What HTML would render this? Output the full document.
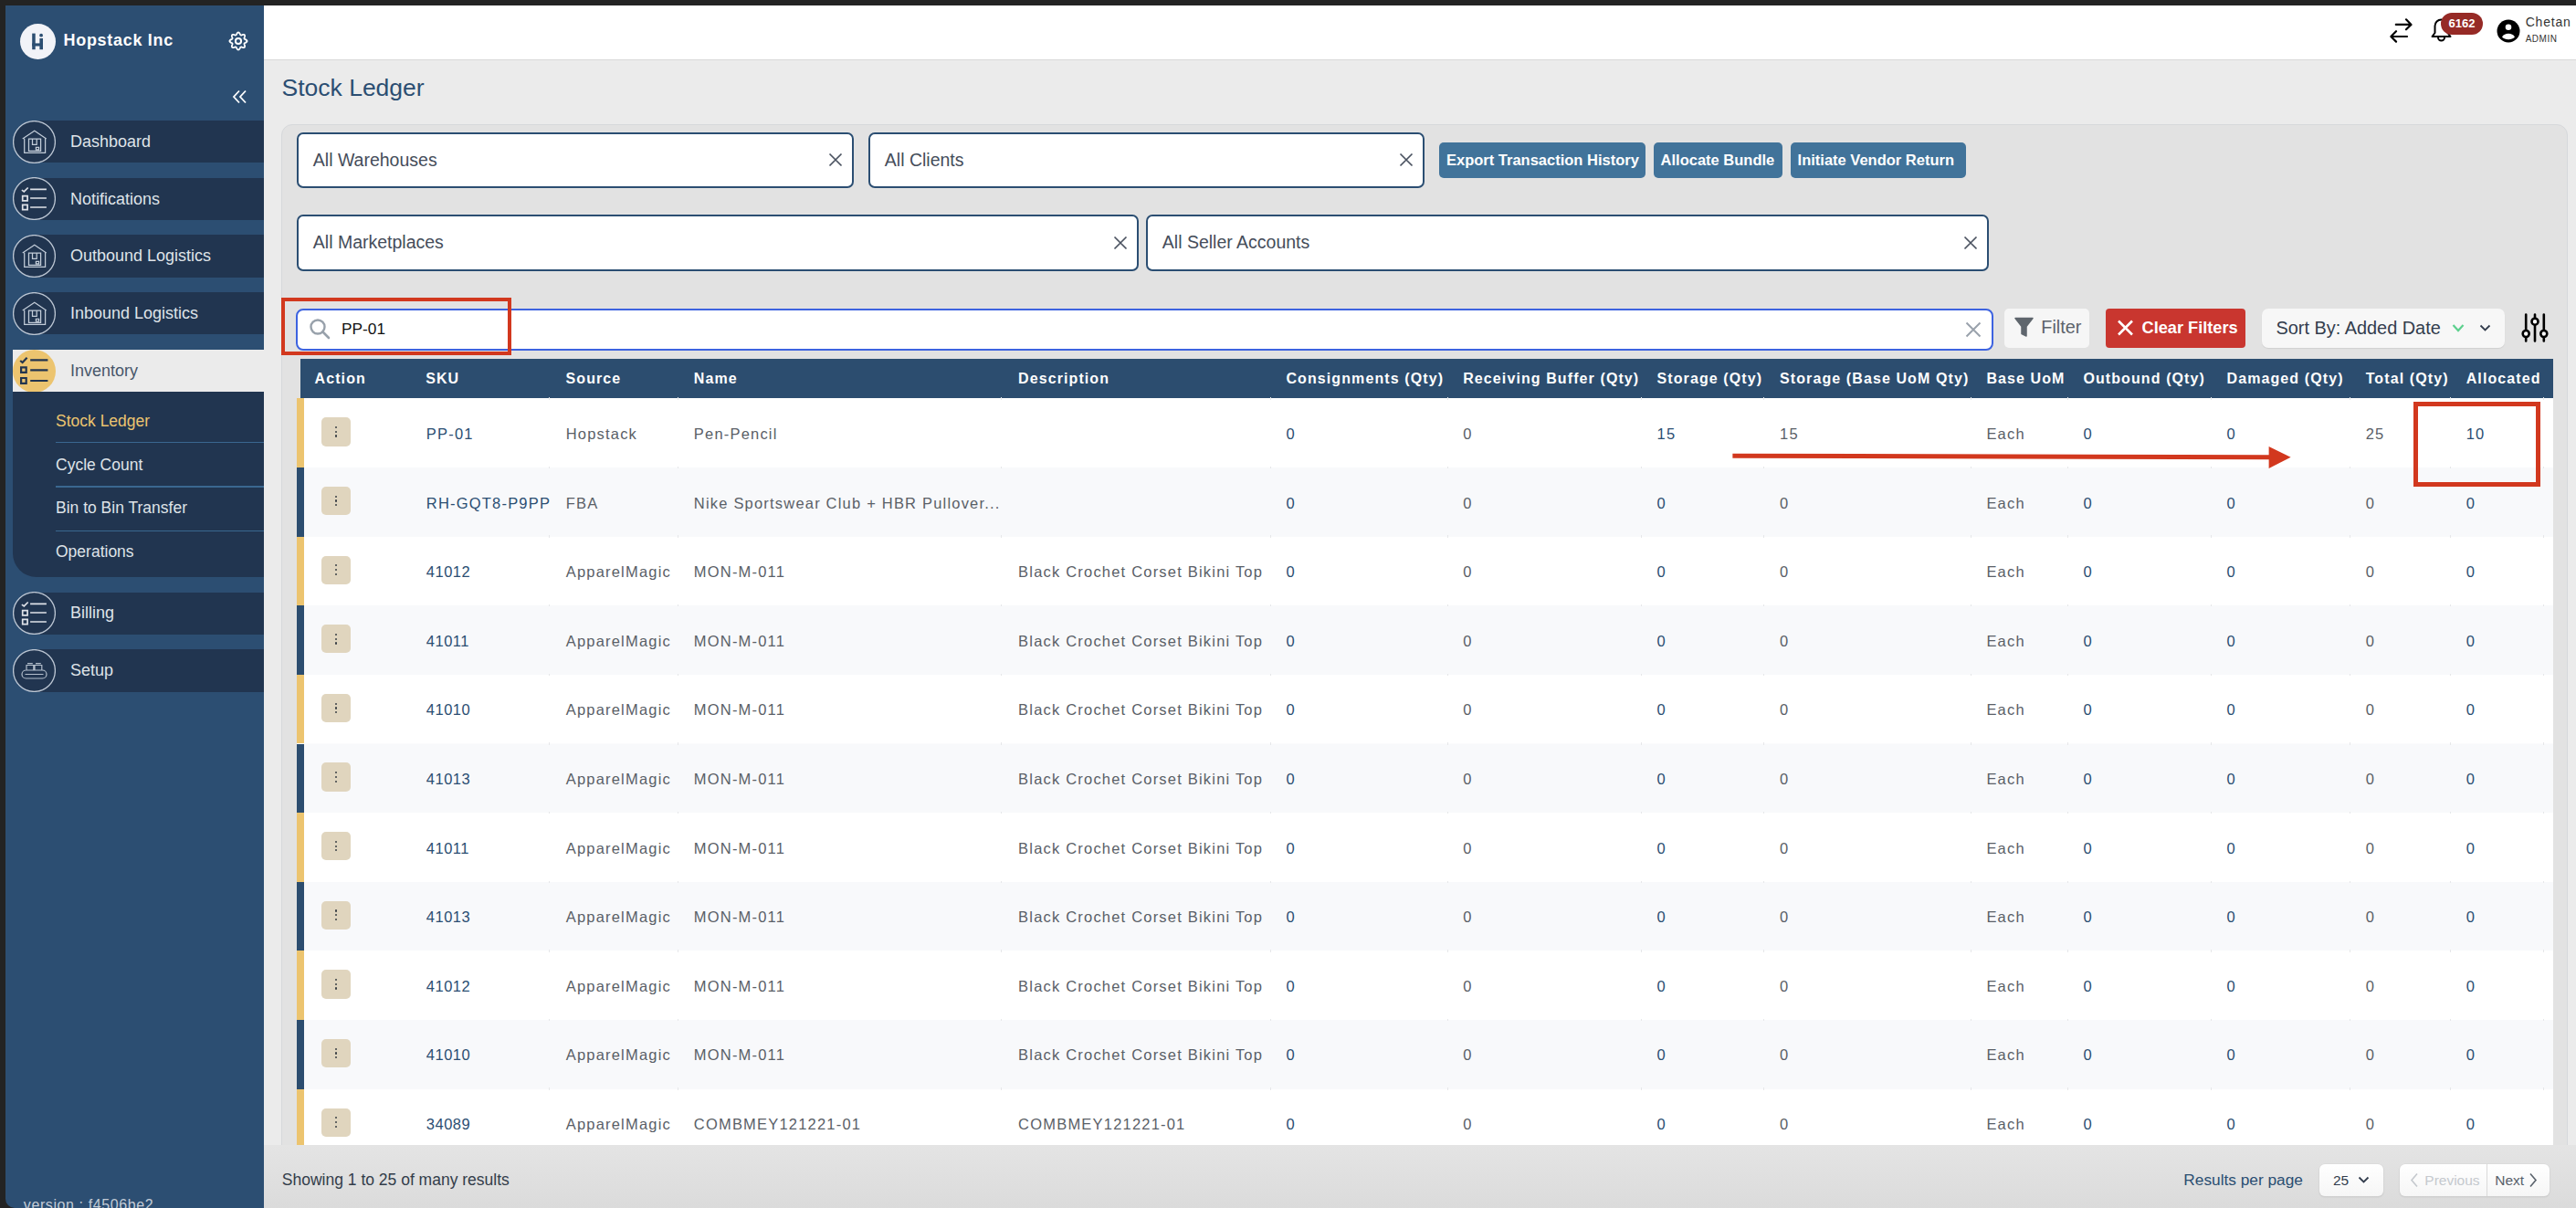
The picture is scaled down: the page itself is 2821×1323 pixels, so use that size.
<!DOCTYPE html>
<html><head><meta charset="utf-8"><title>Stock Ledger</title>
<style>
html,body{margin:0;padding:0;width:2821px;height:1323px;overflow:hidden;background:#232323}
body{position:relative;font-family:"Liberation Sans", sans-serif}
.r{position:absolute}
.t{position:absolute;line-height:1;white-space:nowrap}
</style></head><body>
<div class="r" style="left:0.0px;top:0.0px;width:2821.0px;height:1323.0px;background:#232323"></div>
<div class="r" style="left:288.0px;top:6.0px;width:2533.0px;height:1317.0px;background:#ebebeb"></div>
<div class="r" style="left:6.0px;top:6.0px;width:282.5px;height:1317.0px;background:#2c4e72;border-bottom-left-radius:10px"></div>
<div class="r" style="left:288.5px;top:6.0px;width:2532.5px;height:59.0px;background:#fff;border-bottom:1px solid #d9d9d9"></div>
<div class="r" style="left:22px;top:25.5px;width:39px;height:39px;border-radius:50%;background:#f2f3f8"></div>
<svg class="r" style="left:22px;top:25.5px" width="39" height="39" viewBox="0 0 39 39"><rect x="13.2" y="10.6" width="3.5" height="17.6" fill="#2c4e72"/><rect x="21.4" y="16" width="3.6" height="12.2" fill="#2c4e72"/><rect x="13.2" y="21.4" width="11.8" height="3.1" fill="#2c4e72"/><circle cx="23.1" cy="12.7" r="1.9" fill="#2c4e72"/></svg>
<div class="t" style="left:69.5px;top:35.1px;font-size:18px;color:#fff;font-weight:700;letter-spacing:0.7px;">Hopstack Inc</div>
<svg class="r" style="left:250px;top:34px" width="22" height="22" viewBox="0 0 22 22"><path d="M11.00,1.45 L11.37,1.52 L11.73,1.72 L12.06,2.03 L12.36,2.42 L12.62,2.86 L12.85,3.30 L13.05,3.72 L13.25,4.07 L13.46,4.33 L13.70,4.49 L13.98,4.54 L14.31,4.51 L14.70,4.40 L15.13,4.25 L15.61,4.10 L16.11,3.97 L16.59,3.90 L17.05,3.92 L17.44,4.03 L17.75,4.25 L17.97,4.56 L18.08,4.95 L18.10,5.41 L18.03,5.89 L17.90,6.39 L17.75,6.87 L17.60,7.30 L17.49,7.69 L17.46,8.02 L17.51,8.30 L17.67,8.54 L17.93,8.75 L18.28,8.95 L18.70,9.15 L19.14,9.38 L19.58,9.64 L19.97,9.94 L20.28,10.27 L20.48,10.63 L20.55,11.00 L20.48,11.37 L20.28,11.73 L19.97,12.06 L19.58,12.36 L19.14,12.62 L18.70,12.85 L18.28,13.05 L17.93,13.25 L17.67,13.46 L17.51,13.70 L17.46,13.98 L17.49,14.31 L17.60,14.70 L17.75,15.13 L17.90,15.61 L18.03,16.11 L18.10,16.59 L18.08,17.05 L17.97,17.44 L17.75,17.75 L17.44,17.97 L17.05,18.08 L16.59,18.10 L16.11,18.03 L15.61,17.90 L15.13,17.75 L14.70,17.60 L14.31,17.49 L13.98,17.46 L13.70,17.51 L13.46,17.67 L13.25,17.93 L13.05,18.28 L12.85,18.70 L12.62,19.14 L12.36,19.58 L12.06,19.97 L11.73,20.28 L11.37,20.48 L11.00,20.55 L10.63,20.48 L10.27,20.28 L9.94,19.97 L9.64,19.58 L9.38,19.14 L9.15,18.70 L8.95,18.28 L8.75,17.93 L8.54,17.67 L8.30,17.51 L8.02,17.46 L7.69,17.49 L7.30,17.60 L6.87,17.75 L6.39,17.90 L5.89,18.03 L5.41,18.10 L4.95,18.08 L4.56,17.97 L4.25,17.75 L4.03,17.44 L3.92,17.05 L3.90,16.59 L3.97,16.11 L4.10,15.61 L4.25,15.13 L4.40,14.70 L4.51,14.31 L4.54,13.98 L4.49,13.70 L4.33,13.46 L4.07,13.25 L3.72,13.05 L3.30,12.85 L2.86,12.62 L2.42,12.36 L2.03,12.06 L1.72,11.73 L1.52,11.37 L1.45,11.00 L1.52,10.63 L1.72,10.27 L2.03,9.94 L2.42,9.64 L2.86,9.38 L3.30,9.15 L3.72,8.95 L4.07,8.75 L4.33,8.54 L4.49,8.30 L4.54,8.02 L4.51,7.69 L4.40,7.30 L4.25,6.87 L4.10,6.39 L3.97,5.89 L3.90,5.41 L3.92,4.95 L4.03,4.56 L4.25,4.25 L4.56,4.03 L4.95,3.92 L5.41,3.90 L5.89,3.97 L6.39,4.10 L6.87,4.25 L7.30,4.40 L7.69,4.51 L8.02,4.54 L8.30,4.49 L8.54,4.33 L8.75,4.07 L8.95,3.72 L9.15,3.30 L9.38,2.86 L9.64,2.42 L9.94,2.03 L10.27,1.72 L10.63,1.52Z" fill="none" stroke="#fff" stroke-width="1.8"/><circle cx="11" cy="11" r="3.1" fill="none" stroke="#fff" stroke-width="2"/></svg>
<svg class="r" style="left:254px;top:98px" width="18" height="16" viewBox="0 0 18 16"><path d="M8 1.5 2 8l6 6.5 M15 1.5 9 8l6 6.5" stroke="#fff" stroke-width="1.8" fill="none"/></svg>
<div class="r" style="left:37.0px;top:132.0px;width:251.5px;height:46.3px;background:#213550"></div>
<svg class="r" style="left:14px;top:131.7px" width="47" height="47" viewBox="0 0 47 47"><circle cx="23.5" cy="23.5" r="22.9" fill="#213550" stroke="#bcc6d3" stroke-width="1.3"/><path d="M10.7 19.9 L23.8 11.3 L36.7 19.9 M12.7 19.7 V35.4 H35.6 V19.7 M17.5 20h13.1v13.4H17.5z M21.5 20 V26.4 H26.2 V20 M25.4 29.4h3.2v2.4h-3.2z" stroke="#c2ccd8" stroke-width="1.25" fill="none"/></svg>
<div class="t" style="left:77.0px;top:145.8px;font-size:18px;color:#dfe3e8;">Dashboard</div>
<div class="r" style="left:37.0px;top:194.7px;width:251.5px;height:46.3px;background:#213550"></div>
<svg class="r" style="left:14px;top:194.4px" width="47" height="47" viewBox="0 0 47 47"><circle cx="23.5" cy="23.5" r="22.9" fill="#213550" stroke="#bcc6d3" stroke-width="1.3"/><path d="M9.9 14.1 L12.3 15.9 L16.7 11.5 M19.1 13.3H36.9 M19.1 23H36.9 M19.1 33H36.9 M10.7 20.7h5.4v5.1h-5.4z M10.7 30.4h5.4v5.2h-5.4z" stroke="#dfe2e8" stroke-width="1.7" fill="none"/></svg>
<div class="t" style="left:77.0px;top:208.5px;font-size:18px;color:#dfe3e8;">Notifications</div>
<div class="r" style="left:37.0px;top:257.4px;width:251.5px;height:46.3px;background:#213550"></div>
<svg class="r" style="left:14px;top:257.1px" width="47" height="47" viewBox="0 0 47 47"><circle cx="23.5" cy="23.5" r="22.9" fill="#213550" stroke="#bcc6d3" stroke-width="1.3"/><path d="M10.7 19.9 L23.8 11.3 L36.7 19.9 M12.7 19.7 V35.4 H35.6 V19.7 M17.5 20h13.1v13.4H17.5z M21.5 20 V26.4 H26.2 V20 M25.4 29.4h3.2v2.4h-3.2z" stroke="#c2ccd8" stroke-width="1.25" fill="none"/></svg>
<div class="t" style="left:77.0px;top:271.2px;font-size:18px;color:#dfe3e8;">Outbound Logistics</div>
<div class="r" style="left:37.0px;top:320.1px;width:251.5px;height:46.3px;background:#213550"></div>
<svg class="r" style="left:14px;top:319.8px" width="47" height="47" viewBox="0 0 47 47"><circle cx="23.5" cy="23.5" r="22.9" fill="#213550" stroke="#bcc6d3" stroke-width="1.3"/><path d="M10.7 19.9 L23.8 11.3 L36.7 19.9 M12.7 19.7 V35.4 H35.6 V19.7 M17.5 20h13.1v13.4H17.5z M21.5 20 V26.4 H26.2 V20 M25.4 29.4h3.2v2.4h-3.2z" stroke="#c2ccd8" stroke-width="1.25" fill="none"/></svg>
<div class="t" style="left:77.0px;top:333.9px;font-size:18px;color:#dfe3e8;">Inbound Logistics</div>
<div class="r" style="left:14.0px;top:382.8px;width:274.5px;height:46.6px;background:#ebebeb"></div>
<svg class="r" style="left:14px;top:382.6px" width="47" height="47" viewBox="0 0 47 47"><circle cx="23.5" cy="23.5" r="23.5" fill="#ecc46f"/><path d="M8.2 12 L10.6 14 L15.6 8.8 M19.2 11.4H38.4 M19.2 22.4H38.4 M19.2 34H38.4 M9.1 19.3h5.6v5.6h-5.6z M9.1 31h5.6v5.8h-5.6z" stroke="#22354f" stroke-width="2.2" fill="none"/></svg>
<div class="t" style="left:77.0px;top:396.6px;font-size:18px;color:#47566a;">Inventory</div>
<div class="r" style="left:14px;top:429.4px;width:274.5px;height:202.6px;background:#213550;border-bottom-left-radius:26px"></div>
<div class="r" style="left:61.0px;top:483.9px;width:227.5px;height:1.5px;background:#3a6790"></div>
<div class="r" style="left:61.0px;top:532.2px;width:227.5px;height:1.5px;background:#3a6790"></div>
<div class="r" style="left:61.0px;top:580.8px;width:227.5px;height:1.5px;background:#3a6790"></div>
<div class="t" style="left:61.0px;top:452.8px;font-size:17.5px;color:#ecc46f;">Stock Ledger</div>
<div class="t" style="left:61.0px;top:500.8px;font-size:17.5px;color:#dfe3e8;">Cycle Count</div>
<div class="t" style="left:61.0px;top:548.4px;font-size:17.5px;color:#dfe3e8;">Bin to Bin Transfer</div>
<div class="t" style="left:61.0px;top:596.1px;font-size:17.5px;color:#dfe3e8;">Operations</div>
<div class="r" style="left:37.0px;top:648.5px;width:251.5px;height:46.3px;background:#213550"></div>
<svg class="r" style="left:14px;top:648.2px" width="47" height="47" viewBox="0 0 47 47"><circle cx="23.5" cy="23.5" r="22.9" fill="#213550" stroke="#bcc6d3" stroke-width="1.3"/><path d="M9.9 14.1 L12.3 15.9 L16.7 11.5 M19.1 13.3H36.9 M19.1 23H36.9 M19.1 33H36.9 M10.7 20.7h5.4v5.1h-5.4z M10.7 30.4h5.4v5.2h-5.4z" stroke="#dfe2e8" stroke-width="1.7" fill="none"/></svg>
<div class="t" style="left:77.0px;top:662.3px;font-size:18px;color:#dfe3e8;">Billing</div>
<div class="r" style="left:37.0px;top:711.4px;width:251.5px;height:46.3px;background:#213550"></div>
<svg class="r" style="left:14px;top:711.1px" width="47" height="47" viewBox="0 0 47 47"><circle cx="23.5" cy="23.5" r="22.9" fill="#213550" stroke="#bcc6d3" stroke-width="1.3"/><path d="M14.5 23h18a4.5 4.5 0 0 1 0 9h-18a4.5 4.5 0 0 1 0-9z M13.5 27.5h20 M15 17.5h7.8v5.5H15z M24 17.5h7.8v5.5H24z M16 15.6h5.8 M25 15.6h5.8" stroke="#b4bfcc" stroke-width="1.2" fill="none"/></svg>
<div class="t" style="left:77.0px;top:725.2px;font-size:18px;color:#dfe3e8;">Setup</div>
<div class="t" style="left:25.8px;top:1311.5px;font-size:16px;color:#c3cbd6;letter-spacing:0.6px;">version : f4506be2</div>
<svg class="r" style="left:2616px;top:19px" width="28" height="28" viewBox="0 0 28 28"><path d="M7.8 7.9h16.5 M19 2.3l5.5 5.6-5.5 5.4 M20 21H2.5 M8 15.2L2.4 21 8 26.6" stroke="#000" stroke-width="2.2" fill="none" stroke-linecap="round" stroke-linejoin="round"/></svg>
<svg class="r" style="left:2660px;top:19px" width="27" height="28" viewBox="0 0 27 28"><path d="M13.5 2.5a7 7 0 0 0-7 7v7.5l-3 4h20l-3-4V9.5a7 7 0 0 0-7-7z M10 22a3.5 3.5 0 0 0 7 0" stroke="#000" stroke-width="2" fill="none" stroke-linejoin="round"/></svg>
<div class="r" style="left:2673px;top:13.7px;width:46px;height:24px;border-radius:12px;background:#962a26"></div>
<div class="t" style="left:2681.5px;top:19.3px;font-size:13px;color:#fff;font-weight:700;">6162</div>
<svg class="r" style="left:2733.5px;top:20.5px" width="26" height="26" viewBox="0 0 26 26"><circle cx="13" cy="13" r="12.5" fill="#000"/><circle cx="13" cy="8.8" r="3.3" fill="#fff"/><path d="M6 19.5c1.5-2.6 4-3.8 7-3.8s5.5 1.2 7 3.8c-1.8 1.8-4.2 2.8-7 2.8s-5.2-1-7-2.8z" fill="#fff"/></svg>
<div class="t" style="left:2765.7px;top:17.1px;font-size:14px;color:#333;letter-spacing:0.8px;">Chetan</div>
<div class="t" style="left:2765.7px;top:37.5px;font-size:10px;color:#333;letter-spacing:0.5px;">ADMIN</div>
<div class="t" style="left:308.5px;top:82.6px;font-size:26.5px;color:#2b4e72;">Stock Ledger</div>
<div class="r" style="left:308px;top:135.7px;width:2504px;height:1140px;box-sizing:border-box;background:#e2e2e2;border:1px solid #d6d8db;border-radius:12px"></div>
<div class="r" style="left:325px;top:144.5px;width:610px;height:61.5px;box-sizing:border-box;background:#fff;border:2px solid #2b4e72;border-radius:7px"></div>
<div class="t" style="left:342.8px;top:165.7px;font-size:19.5px;color:#454d5a;">All Warehouses</div>
<svg class="r" style="left:907px;top:167.25px" width="16" height="16" viewBox="0 0 16 16"><path d="M1.5 1.5l13 13 M14.5 1.5l-13 13" stroke="#4a5260" stroke-width="1.7"/></svg>
<div class="r" style="left:951px;top:144.5px;width:609px;height:61.5px;box-sizing:border-box;background:#fff;border:2px solid #2b4e72;border-radius:7px"></div>
<div class="t" style="left:968.8px;top:165.7px;font-size:19.5px;color:#454d5a;">All Clients</div>
<svg class="r" style="left:1532px;top:167.25px" width="16" height="16" viewBox="0 0 16 16"><path d="M1.5 1.5l13 13 M14.5 1.5l-13 13" stroke="#4a5260" stroke-width="1.7"/></svg>
<div class="r" style="left:325px;top:234.5px;width:922px;height:62.5px;box-sizing:border-box;background:#fff;border:2px solid #2b4e72;border-radius:7px"></div>
<div class="t" style="left:342.8px;top:256.2px;font-size:19.5px;color:#454d5a;">All Marketplaces</div>
<svg class="r" style="left:1219px;top:257.75px" width="16" height="16" viewBox="0 0 16 16"><path d="M1.5 1.5l13 13 M14.5 1.5l-13 13" stroke="#4a5260" stroke-width="1.7"/></svg>
<div class="r" style="left:1255px;top:234.5px;width:922.5px;height:62.5px;box-sizing:border-box;background:#fff;border:2px solid #2b4e72;border-radius:7px"></div>
<div class="t" style="left:1272.8px;top:256.2px;font-size:19.5px;color:#454d5a;">All Seller Accounts</div>
<svg class="r" style="left:2149.5px;top:257.75px" width="16" height="16" viewBox="0 0 16 16"><path d="M1.5 1.5l13 13 M14.5 1.5l-13 13" stroke="#4a5260" stroke-width="1.7"/></svg>
<div class="r" style="left:1576px;top:156.4px;width:226.4000000000001px;height:38.3px;background:#41739a;border-radius:5px"></div>
<div class="t" style="left:1584.0px;top:167.2px;font-size:16.5px;color:#fff;font-weight:700;">Export Transaction History</div>
<div class="r" style="left:1810.6px;top:156.4px;width:141.80000000000018px;height:38.3px;background:#41739a;border-radius:5px"></div>
<div class="t" style="left:1818.6px;top:167.2px;font-size:16.5px;color:#fff;font-weight:700;">Allocate Bundle</div>
<div class="r" style="left:1960.6px;top:156.4px;width:192.0999999999999px;height:38.3px;background:#41739a;border-radius:5px"></div>
<div class="t" style="left:1968.6px;top:167.2px;font-size:16.5px;color:#fff;font-weight:700;">Initiate Vendor Return</div>
<div class="r" style="left:324px;top:338px;width:1858.5px;height:46px;box-sizing:border-box;background:#fff;border:2px solid #3d63e0;border-radius:8px"></div>
<svg class="r" style="left:338px;top:348px" width="25" height="25" viewBox="0 0 25 25"><circle cx="10" cy="10" r="7.5" stroke="#98a1ab" stroke-width="2.4" fill="none"/><path d="M15.5 15.5l6.5 6.5" stroke="#98a1ab" stroke-width="2.6" stroke-linecap="round"/></svg>
<div class="t" style="left:374.0px;top:352.2px;font-size:17.3px;color:#111;">PP-01</div>
<svg class="r" style="left:2152px;top:352px" width="18" height="18" viewBox="0 0 18 18"><path d="M1.5 1.5l15 15 M16.5 1.5l-15 15" stroke="#9aa2ac" stroke-width="2"/></svg>
<div class="r" style="left:2195px;top:337.5px;width:93.3px;height:43px;background:#f6f6f6;border-radius:5px"></div>
<svg class="r" style="left:2206px;top:346px" width="21" height="24" viewBox="0 0 21 24"><path d="M1 2.5h19l-7 9v10.5l-5-2.5v-8z" fill="#5f666d" stroke="#5f666d" stroke-width="1.5" stroke-linejoin="round"/></svg>
<div class="t" style="left:2235.3px;top:348.7px;font-size:19.9px;color:#5c636a;">Filter</div>
<div class="r" style="left:2306px;top:337.5px;width:152.7px;height:43px;background:#c9362f;border-radius:4px"></div>
<svg class="r" style="left:2318px;top:350px" width="19" height="18" viewBox="0 0 19 18"><path d="M2 1.5l15 15 M17 1.5l-15 15" stroke="#fff" stroke-width="2.6"/></svg>
<div class="t" style="left:2345.5px;top:350.1px;font-size:18.2px;color:#fff;font-weight:700;">Clear Filters</div>
<div class="r" style="left:2477px;top:337.8px;width:266.4px;height:43px;background:#f7f7f7;border-radius:7px;box-shadow:0 1px 1px rgba(0,0,0,0.08)"></div>
<div class="t" style="left:2492.5px;top:349.5px;font-size:19.9px;color:#333d4d;">Sort By: Added Date</div>
<svg class="r" style="left:2685px;top:354px" width="14" height="10" viewBox="0 0 14 10"><path d="M1.5 2l5.5 6 5.5-6" stroke="#5dd08e" stroke-width="2.2" fill="none"/></svg>
<svg class="r" style="left:2715px;top:354px" width="13" height="10" viewBox="0 0 13 10"><path d="M1.5 2.5l5 5 5-5" stroke="#333d4d" stroke-width="1.8" fill="none"/></svg>
<svg class="r" style="left:2760px;top:343px" width="32" height="32" viewBox="0 0 32 32"><path d="M6.2 1.5v29 M16 1.5v29 M25.8 1.5v29" stroke="#000" stroke-width="2.6" stroke-linecap="round"/><circle cx="6.2" cy="22.5" r="3.5" fill="#fff" stroke="#000" stroke-width="2.6"/><circle cx="16" cy="9.2" r="3.5" fill="#fff" stroke="#000" stroke-width="2.6"/><circle cx="25.8" cy="22.5" r="3.5" fill="#fff" stroke="#000" stroke-width="2.6"/></svg>
<div class="r" style="left:329.0px;top:393.3px;width:2466.5px;height:43.0px;background:#2c4d6f"></div>
<div class="t" style="left:344.5px;top:406.7px;font-size:16px;color:#fff;font-weight:700;letter-spacing:1.1px;">Action</div>
<div class="t" style="left:466.2px;top:406.7px;font-size:16px;color:#fff;font-weight:700;letter-spacing:1.1px;">SKU</div>
<div class="t" style="left:619.5px;top:406.7px;font-size:16px;color:#fff;font-weight:700;letter-spacing:1.1px;">Source</div>
<div class="t" style="left:759.8px;top:406.7px;font-size:16px;color:#fff;font-weight:700;letter-spacing:1.1px;">Name</div>
<div class="t" style="left:1115.0px;top:406.7px;font-size:16px;color:#fff;font-weight:700;letter-spacing:1.1px;">Description</div>
<div class="t" style="left:1408.4px;top:406.7px;font-size:16px;color:#fff;font-weight:700;letter-spacing:1.1px;">Consignments (Qty)</div>
<div class="t" style="left:1602.2px;top:406.7px;font-size:16px;color:#fff;font-weight:700;letter-spacing:1.1px;">Receiving Buffer (Qty)</div>
<div class="t" style="left:1814.5px;top:406.7px;font-size:16px;color:#fff;font-weight:700;letter-spacing:1.1px;">Storage (Qty)</div>
<div class="t" style="left:1949.0px;top:406.7px;font-size:16px;color:#fff;font-weight:700;letter-spacing:1.1px;">Storage (Base UoM Qty)</div>
<div class="t" style="left:2175.4px;top:406.7px;font-size:16px;color:#fff;font-weight:700;letter-spacing:1.1px;">Base UoM</div>
<div class="t" style="left:2281.4px;top:406.7px;font-size:16px;color:#fff;font-weight:700;letter-spacing:1.1px;">Outbound (Qty)</div>
<div class="t" style="left:2438.5px;top:406.7px;font-size:16px;color:#fff;font-weight:700;letter-spacing:1.1px;">Damaged (Qty)</div>
<div class="t" style="left:2590.7px;top:406.7px;font-size:16px;color:#fff;font-weight:700;letter-spacing:1.1px;">Total (Qty)</div>
<div class="t" style="left:2700.7px;top:406.7px;font-size:16px;color:#fff;font-weight:700;letter-spacing:1.1px;">Allocated</div>
<div class="r" style="left:0;top:0;width:2821px;height:1253.5px;overflow:hidden">
<div class="r" style="left:325.0px;top:436.4px;width:2470.5px;height:817.1px;background:#fbfbfc"></div>
<div class="r" style="left:333.0px;top:436.4px;width:2462.5px;height:75.6px;background:#ffffff"></div>
<div class="r" style="left:325.0px;top:436.4px;width:8.0px;height:75.6px;background:#ecc46f"></div>
<div class="r" style="left:352.2px;top:457.3px;width:31.6px;height:31.3px;background:#e0d5be;border-radius:5px"></div>
<div class="r" style="left:366.9px;top:467.06px;width:2.2px;height:2.2px;border-radius:50%;background:#3a3f45"></div>
<div class="r" style="left:366.9px;top:471.86px;width:2.2px;height:2.2px;border-radius:50%;background:#3a3f45"></div>
<div class="r" style="left:366.9px;top:476.46px;width:2.2px;height:2.2px;border-radius:50%;background:#3a3f45"></div>
<div class="t" style="left:466.8px;top:466.8px;font-size:16.5px;color:#2b4e72;letter-spacing:1.2px;">PP-01</div>
<div class="t" style="left:619.7px;top:466.8px;font-size:16.5px;color:#5a6067;letter-spacing:1.2px;">Hopstack</div>
<div class="t" style="left:759.8px;top:466.8px;font-size:16.5px;color:#5a6067;letter-spacing:1.2px;">Pen-Pencil</div>
<div class="t" style="left:1408.4px;top:466.8px;font-size:16.5px;color:#2b4e72;letter-spacing:1.2px;">0</div>
<div class="t" style="left:1602.2px;top:466.8px;font-size:16.5px;color:#5a6067;letter-spacing:1.2px;">0</div>
<div class="t" style="left:1814.5px;top:466.8px;font-size:16.5px;color:#2b4e72;letter-spacing:1.2px;">15</div>
<div class="t" style="left:1949.0px;top:466.8px;font-size:16.5px;color:#5a6067;letter-spacing:1.2px;">15</div>
<div class="t" style="left:2175.4px;top:466.8px;font-size:16.5px;color:#5a6067;letter-spacing:1.2px;">Each</div>
<div class="t" style="left:2281.4px;top:466.8px;font-size:16.5px;color:#2b4e72;letter-spacing:1.2px;">0</div>
<div class="t" style="left:2438.5px;top:466.8px;font-size:16.5px;color:#2b4e72;letter-spacing:1.2px;">0</div>
<div class="t" style="left:2590.7px;top:466.8px;font-size:16.5px;color:#5a6067;letter-spacing:1.2px;">25</div>
<div class="t" style="left:2700.7px;top:466.8px;font-size:16.5px;color:#2b4e72;letter-spacing:1.2px;">10</div>
<div class="r" style="left:333.0px;top:512.0px;width:2462.5px;height:75.6px;background:#f8f9fb"></div>
<div class="r" style="left:325.0px;top:512.0px;width:8.0px;height:75.6px;background:#2c4d6f"></div>
<div class="r" style="left:352.2px;top:532.9px;width:31.6px;height:31.3px;background:#e0d5be;border-radius:5px"></div>
<div class="r" style="left:366.9px;top:542.68px;width:2.2px;height:2.2px;border-radius:50%;background:#3a3f45"></div>
<div class="r" style="left:366.9px;top:547.48px;width:2.2px;height:2.2px;border-radius:50%;background:#3a3f45"></div>
<div class="r" style="left:366.9px;top:552.08px;width:2.2px;height:2.2px;border-radius:50%;background:#3a3f45"></div>
<div class="t" style="left:466.8px;top:542.5px;font-size:16.5px;color:#2b4e72;letter-spacing:1.2px;">RH-GQT8-P9PP</div>
<div class="t" style="left:619.7px;top:542.5px;font-size:16.5px;color:#5a6067;letter-spacing:1.2px;">FBA</div>
<div class="t" style="left:759.8px;top:542.5px;font-size:16.5px;color:#5a6067;letter-spacing:1.2px;">Nike Sportswear Club + HBR Pullover...</div>
<div class="t" style="left:1408.4px;top:542.5px;font-size:16.5px;color:#2b4e72;letter-spacing:1.2px;">0</div>
<div class="t" style="left:1602.2px;top:542.5px;font-size:16.5px;color:#5a6067;letter-spacing:1.2px;">0</div>
<div class="t" style="left:1814.5px;top:542.5px;font-size:16.5px;color:#2b4e72;letter-spacing:1.2px;">0</div>
<div class="t" style="left:1949.0px;top:542.5px;font-size:16.5px;color:#5a6067;letter-spacing:1.2px;">0</div>
<div class="t" style="left:2175.4px;top:542.5px;font-size:16.5px;color:#5a6067;letter-spacing:1.2px;">Each</div>
<div class="t" style="left:2281.4px;top:542.5px;font-size:16.5px;color:#2b4e72;letter-spacing:1.2px;">0</div>
<div class="t" style="left:2438.5px;top:542.5px;font-size:16.5px;color:#2b4e72;letter-spacing:1.2px;">0</div>
<div class="t" style="left:2590.7px;top:542.5px;font-size:16.5px;color:#5a6067;letter-spacing:1.2px;">0</div>
<div class="t" style="left:2700.7px;top:542.5px;font-size:16.5px;color:#2b4e72;letter-spacing:1.2px;">0</div>
<div class="r" style="left:333.0px;top:587.6px;width:2462.5px;height:75.6px;background:#ffffff"></div>
<div class="r" style="left:325.0px;top:587.6px;width:8.0px;height:75.6px;background:#ecc46f"></div>
<div class="r" style="left:352.2px;top:608.6px;width:31.6px;height:31.3px;background:#e0d5be;border-radius:5px"></div>
<div class="r" style="left:366.9px;top:618.30px;width:2.2px;height:2.2px;border-radius:50%;background:#3a3f45"></div>
<div class="r" style="left:366.9px;top:623.10px;width:2.2px;height:2.2px;border-radius:50%;background:#3a3f45"></div>
<div class="r" style="left:366.9px;top:627.70px;width:2.2px;height:2.2px;border-radius:50%;background:#3a3f45"></div>
<div class="t" style="left:466.8px;top:618.1px;font-size:16.5px;color:#2b4e72;letter-spacing:0.5px;">41012</div>
<div class="t" style="left:619.7px;top:618.1px;font-size:16.5px;color:#5a6067;letter-spacing:1.2px;">ApparelMagic</div>
<div class="t" style="left:759.8px;top:618.1px;font-size:16.5px;color:#5a6067;letter-spacing:1.2px;">MON-M-011</div>
<div class="t" style="left:1115.1px;top:618.1px;font-size:16.5px;color:#5a6067;letter-spacing:1.2px;">Black Crochet Corset Bikini Top</div>
<div class="t" style="left:1408.4px;top:618.1px;font-size:16.5px;color:#2b4e72;letter-spacing:1.2px;">0</div>
<div class="t" style="left:1602.2px;top:618.1px;font-size:16.5px;color:#5a6067;letter-spacing:1.2px;">0</div>
<div class="t" style="left:1814.5px;top:618.1px;font-size:16.5px;color:#2b4e72;letter-spacing:1.2px;">0</div>
<div class="t" style="left:1949.0px;top:618.1px;font-size:16.5px;color:#5a6067;letter-spacing:1.2px;">0</div>
<div class="t" style="left:2175.4px;top:618.1px;font-size:16.5px;color:#5a6067;letter-spacing:1.2px;">Each</div>
<div class="t" style="left:2281.4px;top:618.1px;font-size:16.5px;color:#2b4e72;letter-spacing:1.2px;">0</div>
<div class="t" style="left:2438.5px;top:618.1px;font-size:16.5px;color:#2b4e72;letter-spacing:1.2px;">0</div>
<div class="t" style="left:2590.7px;top:618.1px;font-size:16.5px;color:#5a6067;letter-spacing:1.2px;">0</div>
<div class="t" style="left:2700.7px;top:618.1px;font-size:16.5px;color:#2b4e72;letter-spacing:1.2px;">0</div>
<div class="r" style="left:333.0px;top:663.3px;width:2462.5px;height:75.6px;background:#f8f9fb"></div>
<div class="r" style="left:325.0px;top:663.3px;width:8.0px;height:75.6px;background:#2c4d6f"></div>
<div class="r" style="left:352.2px;top:684.2px;width:31.6px;height:31.3px;background:#e0d5be;border-radius:5px"></div>
<div class="r" style="left:366.9px;top:693.92px;width:2.2px;height:2.2px;border-radius:50%;background:#3a3f45"></div>
<div class="r" style="left:366.9px;top:698.72px;width:2.2px;height:2.2px;border-radius:50%;background:#3a3f45"></div>
<div class="r" style="left:366.9px;top:703.32px;width:2.2px;height:2.2px;border-radius:50%;background:#3a3f45"></div>
<div class="t" style="left:466.8px;top:693.7px;font-size:16.5px;color:#2b4e72;letter-spacing:0.5px;">41011</div>
<div class="t" style="left:619.7px;top:693.7px;font-size:16.5px;color:#5a6067;letter-spacing:1.2px;">ApparelMagic</div>
<div class="t" style="left:759.8px;top:693.7px;font-size:16.5px;color:#5a6067;letter-spacing:1.2px;">MON-M-011</div>
<div class="t" style="left:1115.1px;top:693.7px;font-size:16.5px;color:#5a6067;letter-spacing:1.2px;">Black Crochet Corset Bikini Top</div>
<div class="t" style="left:1408.4px;top:693.7px;font-size:16.5px;color:#2b4e72;letter-spacing:1.2px;">0</div>
<div class="t" style="left:1602.2px;top:693.7px;font-size:16.5px;color:#5a6067;letter-spacing:1.2px;">0</div>
<div class="t" style="left:1814.5px;top:693.7px;font-size:16.5px;color:#2b4e72;letter-spacing:1.2px;">0</div>
<div class="t" style="left:1949.0px;top:693.7px;font-size:16.5px;color:#5a6067;letter-spacing:1.2px;">0</div>
<div class="t" style="left:2175.4px;top:693.7px;font-size:16.5px;color:#5a6067;letter-spacing:1.2px;">Each</div>
<div class="t" style="left:2281.4px;top:693.7px;font-size:16.5px;color:#2b4e72;letter-spacing:1.2px;">0</div>
<div class="t" style="left:2438.5px;top:693.7px;font-size:16.5px;color:#2b4e72;letter-spacing:1.2px;">0</div>
<div class="t" style="left:2590.7px;top:693.7px;font-size:16.5px;color:#5a6067;letter-spacing:1.2px;">0</div>
<div class="t" style="left:2700.7px;top:693.7px;font-size:16.5px;color:#2b4e72;letter-spacing:1.2px;">0</div>
<div class="r" style="left:333.0px;top:738.9px;width:2462.5px;height:75.6px;background:#ffffff"></div>
<div class="r" style="left:325.0px;top:738.9px;width:8.0px;height:75.6px;background:#ecc46f"></div>
<div class="r" style="left:352.2px;top:759.8px;width:31.6px;height:31.3px;background:#e0d5be;border-radius:5px"></div>
<div class="r" style="left:366.9px;top:769.54px;width:2.2px;height:2.2px;border-radius:50%;background:#3a3f45"></div>
<div class="r" style="left:366.9px;top:774.34px;width:2.2px;height:2.2px;border-radius:50%;background:#3a3f45"></div>
<div class="r" style="left:366.9px;top:778.94px;width:2.2px;height:2.2px;border-radius:50%;background:#3a3f45"></div>
<div class="t" style="left:466.8px;top:769.3px;font-size:16.5px;color:#2b4e72;letter-spacing:0.5px;">41010</div>
<div class="t" style="left:619.7px;top:769.3px;font-size:16.5px;color:#5a6067;letter-spacing:1.2px;">ApparelMagic</div>
<div class="t" style="left:759.8px;top:769.3px;font-size:16.5px;color:#5a6067;letter-spacing:1.2px;">MON-M-011</div>
<div class="t" style="left:1115.1px;top:769.3px;font-size:16.5px;color:#5a6067;letter-spacing:1.2px;">Black Crochet Corset Bikini Top</div>
<div class="t" style="left:1408.4px;top:769.3px;font-size:16.5px;color:#2b4e72;letter-spacing:1.2px;">0</div>
<div class="t" style="left:1602.2px;top:769.3px;font-size:16.5px;color:#5a6067;letter-spacing:1.2px;">0</div>
<div class="t" style="left:1814.5px;top:769.3px;font-size:16.5px;color:#2b4e72;letter-spacing:1.2px;">0</div>
<div class="t" style="left:1949.0px;top:769.3px;font-size:16.5px;color:#5a6067;letter-spacing:1.2px;">0</div>
<div class="t" style="left:2175.4px;top:769.3px;font-size:16.5px;color:#5a6067;letter-spacing:1.2px;">Each</div>
<div class="t" style="left:2281.4px;top:769.3px;font-size:16.5px;color:#2b4e72;letter-spacing:1.2px;">0</div>
<div class="t" style="left:2438.5px;top:769.3px;font-size:16.5px;color:#2b4e72;letter-spacing:1.2px;">0</div>
<div class="t" style="left:2590.7px;top:769.3px;font-size:16.5px;color:#5a6067;letter-spacing:1.2px;">0</div>
<div class="t" style="left:2700.7px;top:769.3px;font-size:16.5px;color:#2b4e72;letter-spacing:1.2px;">0</div>
<div class="r" style="left:333.0px;top:814.5px;width:2462.5px;height:75.6px;background:#f8f9fb"></div>
<div class="r" style="left:325.0px;top:814.5px;width:8.0px;height:75.6px;background:#2c4d6f"></div>
<div class="r" style="left:352.2px;top:835.4px;width:31.6px;height:31.3px;background:#e0d5be;border-radius:5px"></div>
<div class="r" style="left:366.9px;top:845.16px;width:2.2px;height:2.2px;border-radius:50%;background:#3a3f45"></div>
<div class="r" style="left:366.9px;top:849.96px;width:2.2px;height:2.2px;border-radius:50%;background:#3a3f45"></div>
<div class="r" style="left:366.9px;top:854.56px;width:2.2px;height:2.2px;border-radius:50%;background:#3a3f45"></div>
<div class="t" style="left:466.8px;top:844.9px;font-size:16.5px;color:#2b4e72;letter-spacing:0.5px;">41013</div>
<div class="t" style="left:619.7px;top:844.9px;font-size:16.5px;color:#5a6067;letter-spacing:1.2px;">ApparelMagic</div>
<div class="t" style="left:759.8px;top:844.9px;font-size:16.5px;color:#5a6067;letter-spacing:1.2px;">MON-M-011</div>
<div class="t" style="left:1115.1px;top:844.9px;font-size:16.5px;color:#5a6067;letter-spacing:1.2px;">Black Crochet Corset Bikini Top</div>
<div class="t" style="left:1408.4px;top:844.9px;font-size:16.5px;color:#2b4e72;letter-spacing:1.2px;">0</div>
<div class="t" style="left:1602.2px;top:844.9px;font-size:16.5px;color:#5a6067;letter-spacing:1.2px;">0</div>
<div class="t" style="left:1814.5px;top:844.9px;font-size:16.5px;color:#2b4e72;letter-spacing:1.2px;">0</div>
<div class="t" style="left:1949.0px;top:844.9px;font-size:16.5px;color:#5a6067;letter-spacing:1.2px;">0</div>
<div class="t" style="left:2175.4px;top:844.9px;font-size:16.5px;color:#5a6067;letter-spacing:1.2px;">Each</div>
<div class="t" style="left:2281.4px;top:844.9px;font-size:16.5px;color:#2b4e72;letter-spacing:1.2px;">0</div>
<div class="t" style="left:2438.5px;top:844.9px;font-size:16.5px;color:#2b4e72;letter-spacing:1.2px;">0</div>
<div class="t" style="left:2590.7px;top:844.9px;font-size:16.5px;color:#5a6067;letter-spacing:1.2px;">0</div>
<div class="t" style="left:2700.7px;top:844.9px;font-size:16.5px;color:#2b4e72;letter-spacing:1.2px;">0</div>
<div class="r" style="left:333.0px;top:890.1px;width:2462.5px;height:75.6px;background:#ffffff"></div>
<div class="r" style="left:325.0px;top:890.1px;width:8.0px;height:75.6px;background:#ecc46f"></div>
<div class="r" style="left:352.2px;top:911.0px;width:31.6px;height:31.3px;background:#e0d5be;border-radius:5px"></div>
<div class="r" style="left:366.9px;top:920.78px;width:2.2px;height:2.2px;border-radius:50%;background:#3a3f45"></div>
<div class="r" style="left:366.9px;top:925.58px;width:2.2px;height:2.2px;border-radius:50%;background:#3a3f45"></div>
<div class="r" style="left:366.9px;top:930.18px;width:2.2px;height:2.2px;border-radius:50%;background:#3a3f45"></div>
<div class="t" style="left:466.8px;top:920.6px;font-size:16.5px;color:#2b4e72;letter-spacing:0.5px;">41011</div>
<div class="t" style="left:619.7px;top:920.6px;font-size:16.5px;color:#5a6067;letter-spacing:1.2px;">ApparelMagic</div>
<div class="t" style="left:759.8px;top:920.6px;font-size:16.5px;color:#5a6067;letter-spacing:1.2px;">MON-M-011</div>
<div class="t" style="left:1115.1px;top:920.6px;font-size:16.5px;color:#5a6067;letter-spacing:1.2px;">Black Crochet Corset Bikini Top</div>
<div class="t" style="left:1408.4px;top:920.6px;font-size:16.5px;color:#2b4e72;letter-spacing:1.2px;">0</div>
<div class="t" style="left:1602.2px;top:920.6px;font-size:16.5px;color:#5a6067;letter-spacing:1.2px;">0</div>
<div class="t" style="left:1814.5px;top:920.6px;font-size:16.5px;color:#2b4e72;letter-spacing:1.2px;">0</div>
<div class="t" style="left:1949.0px;top:920.6px;font-size:16.5px;color:#5a6067;letter-spacing:1.2px;">0</div>
<div class="t" style="left:2175.4px;top:920.6px;font-size:16.5px;color:#5a6067;letter-spacing:1.2px;">Each</div>
<div class="t" style="left:2281.4px;top:920.6px;font-size:16.5px;color:#2b4e72;letter-spacing:1.2px;">0</div>
<div class="t" style="left:2438.5px;top:920.6px;font-size:16.5px;color:#2b4e72;letter-spacing:1.2px;">0</div>
<div class="t" style="left:2590.7px;top:920.6px;font-size:16.5px;color:#5a6067;letter-spacing:1.2px;">0</div>
<div class="t" style="left:2700.7px;top:920.6px;font-size:16.5px;color:#2b4e72;letter-spacing:1.2px;">0</div>
<div class="r" style="left:333.0px;top:965.7px;width:2462.5px;height:75.6px;background:#f8f9fb"></div>
<div class="r" style="left:325.0px;top:965.7px;width:8.0px;height:75.6px;background:#2c4d6f"></div>
<div class="r" style="left:352.2px;top:986.6px;width:31.6px;height:31.3px;background:#e0d5be;border-radius:5px"></div>
<div class="r" style="left:366.9px;top:996.40px;width:2.2px;height:2.2px;border-radius:50%;background:#3a3f45"></div>
<div class="r" style="left:366.9px;top:1001.20px;width:2.2px;height:2.2px;border-radius:50%;background:#3a3f45"></div>
<div class="r" style="left:366.9px;top:1005.80px;width:2.2px;height:2.2px;border-radius:50%;background:#3a3f45"></div>
<div class="t" style="left:466.8px;top:996.2px;font-size:16.5px;color:#2b4e72;letter-spacing:0.5px;">41013</div>
<div class="t" style="left:619.7px;top:996.2px;font-size:16.5px;color:#5a6067;letter-spacing:1.2px;">ApparelMagic</div>
<div class="t" style="left:759.8px;top:996.2px;font-size:16.5px;color:#5a6067;letter-spacing:1.2px;">MON-M-011</div>
<div class="t" style="left:1115.1px;top:996.2px;font-size:16.5px;color:#5a6067;letter-spacing:1.2px;">Black Crochet Corset Bikini Top</div>
<div class="t" style="left:1408.4px;top:996.2px;font-size:16.5px;color:#2b4e72;letter-spacing:1.2px;">0</div>
<div class="t" style="left:1602.2px;top:996.2px;font-size:16.5px;color:#5a6067;letter-spacing:1.2px;">0</div>
<div class="t" style="left:1814.5px;top:996.2px;font-size:16.5px;color:#2b4e72;letter-spacing:1.2px;">0</div>
<div class="t" style="left:1949.0px;top:996.2px;font-size:16.5px;color:#5a6067;letter-spacing:1.2px;">0</div>
<div class="t" style="left:2175.4px;top:996.2px;font-size:16.5px;color:#5a6067;letter-spacing:1.2px;">Each</div>
<div class="t" style="left:2281.4px;top:996.2px;font-size:16.5px;color:#2b4e72;letter-spacing:1.2px;">0</div>
<div class="t" style="left:2438.5px;top:996.2px;font-size:16.5px;color:#2b4e72;letter-spacing:1.2px;">0</div>
<div class="t" style="left:2590.7px;top:996.2px;font-size:16.5px;color:#5a6067;letter-spacing:1.2px;">0</div>
<div class="t" style="left:2700.7px;top:996.2px;font-size:16.5px;color:#2b4e72;letter-spacing:1.2px;">0</div>
<div class="r" style="left:333.0px;top:1041.4px;width:2462.5px;height:75.6px;background:#ffffff"></div>
<div class="r" style="left:325.0px;top:1041.4px;width:8.0px;height:75.6px;background:#ecc46f"></div>
<div class="r" style="left:352.2px;top:1062.3px;width:31.6px;height:31.3px;background:#e0d5be;border-radius:5px"></div>
<div class="r" style="left:366.9px;top:1072.02px;width:2.2px;height:2.2px;border-radius:50%;background:#3a3f45"></div>
<div class="r" style="left:366.9px;top:1076.82px;width:2.2px;height:2.2px;border-radius:50%;background:#3a3f45"></div>
<div class="r" style="left:366.9px;top:1081.42px;width:2.2px;height:2.2px;border-radius:50%;background:#3a3f45"></div>
<div class="t" style="left:466.8px;top:1071.8px;font-size:16.5px;color:#2b4e72;letter-spacing:0.5px;">41012</div>
<div class="t" style="left:619.7px;top:1071.8px;font-size:16.5px;color:#5a6067;letter-spacing:1.2px;">ApparelMagic</div>
<div class="t" style="left:759.8px;top:1071.8px;font-size:16.5px;color:#5a6067;letter-spacing:1.2px;">MON-M-011</div>
<div class="t" style="left:1115.1px;top:1071.8px;font-size:16.5px;color:#5a6067;letter-spacing:1.2px;">Black Crochet Corset Bikini Top</div>
<div class="t" style="left:1408.4px;top:1071.8px;font-size:16.5px;color:#2b4e72;letter-spacing:1.2px;">0</div>
<div class="t" style="left:1602.2px;top:1071.8px;font-size:16.5px;color:#5a6067;letter-spacing:1.2px;">0</div>
<div class="t" style="left:1814.5px;top:1071.8px;font-size:16.5px;color:#2b4e72;letter-spacing:1.2px;">0</div>
<div class="t" style="left:1949.0px;top:1071.8px;font-size:16.5px;color:#5a6067;letter-spacing:1.2px;">0</div>
<div class="t" style="left:2175.4px;top:1071.8px;font-size:16.5px;color:#5a6067;letter-spacing:1.2px;">Each</div>
<div class="t" style="left:2281.4px;top:1071.8px;font-size:16.5px;color:#2b4e72;letter-spacing:1.2px;">0</div>
<div class="t" style="left:2438.5px;top:1071.8px;font-size:16.5px;color:#2b4e72;letter-spacing:1.2px;">0</div>
<div class="t" style="left:2590.7px;top:1071.8px;font-size:16.5px;color:#5a6067;letter-spacing:1.2px;">0</div>
<div class="t" style="left:2700.7px;top:1071.8px;font-size:16.5px;color:#2b4e72;letter-spacing:1.2px;">0</div>
<div class="r" style="left:333.0px;top:1117.0px;width:2462.5px;height:75.6px;background:#f8f9fb"></div>
<div class="r" style="left:325.0px;top:1117.0px;width:8.0px;height:75.6px;background:#2c4d6f"></div>
<div class="r" style="left:352.2px;top:1137.9px;width:31.6px;height:31.3px;background:#e0d5be;border-radius:5px"></div>
<div class="r" style="left:366.9px;top:1147.64px;width:2.2px;height:2.2px;border-radius:50%;background:#3a3f45"></div>
<div class="r" style="left:366.9px;top:1152.44px;width:2.2px;height:2.2px;border-radius:50%;background:#3a3f45"></div>
<div class="r" style="left:366.9px;top:1157.04px;width:2.2px;height:2.2px;border-radius:50%;background:#3a3f45"></div>
<div class="t" style="left:466.8px;top:1147.4px;font-size:16.5px;color:#2b4e72;letter-spacing:0.5px;">41010</div>
<div class="t" style="left:619.7px;top:1147.4px;font-size:16.5px;color:#5a6067;letter-spacing:1.2px;">ApparelMagic</div>
<div class="t" style="left:759.8px;top:1147.4px;font-size:16.5px;color:#5a6067;letter-spacing:1.2px;">MON-M-011</div>
<div class="t" style="left:1115.1px;top:1147.4px;font-size:16.5px;color:#5a6067;letter-spacing:1.2px;">Black Crochet Corset Bikini Top</div>
<div class="t" style="left:1408.4px;top:1147.4px;font-size:16.5px;color:#2b4e72;letter-spacing:1.2px;">0</div>
<div class="t" style="left:1602.2px;top:1147.4px;font-size:16.5px;color:#5a6067;letter-spacing:1.2px;">0</div>
<div class="t" style="left:1814.5px;top:1147.4px;font-size:16.5px;color:#2b4e72;letter-spacing:1.2px;">0</div>
<div class="t" style="left:1949.0px;top:1147.4px;font-size:16.5px;color:#5a6067;letter-spacing:1.2px;">0</div>
<div class="t" style="left:2175.4px;top:1147.4px;font-size:16.5px;color:#5a6067;letter-spacing:1.2px;">Each</div>
<div class="t" style="left:2281.4px;top:1147.4px;font-size:16.5px;color:#2b4e72;letter-spacing:1.2px;">0</div>
<div class="t" style="left:2438.5px;top:1147.4px;font-size:16.5px;color:#2b4e72;letter-spacing:1.2px;">0</div>
<div class="t" style="left:2590.7px;top:1147.4px;font-size:16.5px;color:#5a6067;letter-spacing:1.2px;">0</div>
<div class="t" style="left:2700.7px;top:1147.4px;font-size:16.5px;color:#2b4e72;letter-spacing:1.2px;">0</div>
<div class="r" style="left:333.0px;top:1192.6px;width:2462.5px;height:75.6px;background:#ffffff"></div>
<div class="r" style="left:325.0px;top:1192.6px;width:8.0px;height:75.6px;background:#ecc46f"></div>
<div class="r" style="left:352.2px;top:1213.5px;width:31.6px;height:31.3px;background:#e0d5be;border-radius:5px"></div>
<div class="r" style="left:366.9px;top:1223.26px;width:2.2px;height:2.2px;border-radius:50%;background:#3a3f45"></div>
<div class="r" style="left:366.9px;top:1228.06px;width:2.2px;height:2.2px;border-radius:50%;background:#3a3f45"></div>
<div class="r" style="left:366.9px;top:1232.66px;width:2.2px;height:2.2px;border-radius:50%;background:#3a3f45"></div>
<div class="t" style="left:466.8px;top:1223.0px;font-size:16.5px;color:#2b4e72;letter-spacing:0.5px;">34089</div>
<div class="t" style="left:619.7px;top:1223.0px;font-size:16.5px;color:#5a6067;letter-spacing:1.2px;">ApparelMagic</div>
<div class="t" style="left:759.8px;top:1223.0px;font-size:16.5px;color:#5a6067;letter-spacing:1.2px;">COMBMEY121221-01</div>
<div class="t" style="left:1115.1px;top:1223.0px;font-size:16.5px;color:#5a6067;letter-spacing:1.2px;">COMBMEY121221-01</div>
<div class="t" style="left:1408.4px;top:1223.0px;font-size:16.5px;color:#2b4e72;letter-spacing:1.2px;">0</div>
<div class="t" style="left:1602.2px;top:1223.0px;font-size:16.5px;color:#5a6067;letter-spacing:1.2px;">0</div>
<div class="t" style="left:1814.5px;top:1223.0px;font-size:16.5px;color:#2b4e72;letter-spacing:1.2px;">0</div>
<div class="t" style="left:1949.0px;top:1223.0px;font-size:16.5px;color:#5a6067;letter-spacing:1.2px;">0</div>
<div class="t" style="left:2175.4px;top:1223.0px;font-size:16.5px;color:#5a6067;letter-spacing:1.2px;">Each</div>
<div class="t" style="left:2281.4px;top:1223.0px;font-size:16.5px;color:#2b4e72;letter-spacing:1.2px;">0</div>
<div class="t" style="left:2438.5px;top:1223.0px;font-size:16.5px;color:#2b4e72;letter-spacing:1.2px;">0</div>
<div class="t" style="left:2590.7px;top:1223.0px;font-size:16.5px;color:#5a6067;letter-spacing:1.2px;">0</div>
<div class="t" style="left:2700.7px;top:1223.0px;font-size:16.5px;color:#2b4e72;letter-spacing:1.2px;">0</div>
<div class="r" style="left:601.0px;top:435.2px;width:1.0px;height:2.4px;background:#e6e7e9"></div>
<div class="r" style="left:742.0px;top:435.2px;width:1.0px;height:2.4px;background:#e6e7e9"></div>
<div class="r" style="left:1096.3px;top:435.2px;width:1.0px;height:2.4px;background:#e6e7e9"></div>
<div class="r" style="left:1390.5px;top:435.2px;width:1.0px;height:2.4px;background:#e6e7e9"></div>
<div class="r" style="left:1584.6px;top:435.2px;width:1.0px;height:2.4px;background:#e6e7e9"></div>
<div class="r" style="left:1796.7px;top:435.2px;width:1.0px;height:2.4px;background:#e6e7e9"></div>
<div class="r" style="left:1931.2px;top:435.2px;width:1.0px;height:2.4px;background:#e6e7e9"></div>
<div class="r" style="left:2158.0px;top:435.2px;width:1.0px;height:2.4px;background:#e6e7e9"></div>
<div class="r" style="left:2264.0px;top:435.2px;width:1.0px;height:2.4px;background:#e6e7e9"></div>
<div class="r" style="left:2420.8px;top:435.2px;width:1.0px;height:2.4px;background:#e6e7e9"></div>
<div class="r" style="left:2572.8px;top:435.2px;width:1.0px;height:2.4px;background:#e6e7e9"></div>
<div class="r" style="left:2682.7px;top:435.2px;width:1.0px;height:2.4px;background:#e6e7e9"></div>
<div class="r" style="left:2784.9px;top:435.2px;width:1.0px;height:2.4px;background:#e6e7e9"></div>
<div class="r" style="left:601.0px;top:510.8px;width:1.0px;height:2.4px;background:#e6e7e9"></div>
<div class="r" style="left:742.0px;top:510.8px;width:1.0px;height:2.4px;background:#e6e7e9"></div>
<div class="r" style="left:1096.3px;top:510.8px;width:1.0px;height:2.4px;background:#e6e7e9"></div>
<div class="r" style="left:1390.5px;top:510.8px;width:1.0px;height:2.4px;background:#e6e7e9"></div>
<div class="r" style="left:1584.6px;top:510.8px;width:1.0px;height:2.4px;background:#e6e7e9"></div>
<div class="r" style="left:1796.7px;top:510.8px;width:1.0px;height:2.4px;background:#e6e7e9"></div>
<div class="r" style="left:1931.2px;top:510.8px;width:1.0px;height:2.4px;background:#e6e7e9"></div>
<div class="r" style="left:2158.0px;top:510.8px;width:1.0px;height:2.4px;background:#e6e7e9"></div>
<div class="r" style="left:2264.0px;top:510.8px;width:1.0px;height:2.4px;background:#e6e7e9"></div>
<div class="r" style="left:2420.8px;top:510.8px;width:1.0px;height:2.4px;background:#e6e7e9"></div>
<div class="r" style="left:2572.8px;top:510.8px;width:1.0px;height:2.4px;background:#e6e7e9"></div>
<div class="r" style="left:2682.7px;top:510.8px;width:1.0px;height:2.4px;background:#e6e7e9"></div>
<div class="r" style="left:2784.9px;top:510.8px;width:1.0px;height:2.4px;background:#e6e7e9"></div>
<div class="r" style="left:601.0px;top:586.4px;width:1.0px;height:2.4px;background:#e6e7e9"></div>
<div class="r" style="left:742.0px;top:586.4px;width:1.0px;height:2.4px;background:#e6e7e9"></div>
<div class="r" style="left:1096.3px;top:586.4px;width:1.0px;height:2.4px;background:#e6e7e9"></div>
<div class="r" style="left:1390.5px;top:586.4px;width:1.0px;height:2.4px;background:#e6e7e9"></div>
<div class="r" style="left:1584.6px;top:586.4px;width:1.0px;height:2.4px;background:#e6e7e9"></div>
<div class="r" style="left:1796.7px;top:586.4px;width:1.0px;height:2.4px;background:#e6e7e9"></div>
<div class="r" style="left:1931.2px;top:586.4px;width:1.0px;height:2.4px;background:#e6e7e9"></div>
<div class="r" style="left:2158.0px;top:586.4px;width:1.0px;height:2.4px;background:#e6e7e9"></div>
<div class="r" style="left:2264.0px;top:586.4px;width:1.0px;height:2.4px;background:#e6e7e9"></div>
<div class="r" style="left:2420.8px;top:586.4px;width:1.0px;height:2.4px;background:#e6e7e9"></div>
<div class="r" style="left:2572.8px;top:586.4px;width:1.0px;height:2.4px;background:#e6e7e9"></div>
<div class="r" style="left:2682.7px;top:586.4px;width:1.0px;height:2.4px;background:#e6e7e9"></div>
<div class="r" style="left:2784.9px;top:586.4px;width:1.0px;height:2.4px;background:#e6e7e9"></div>
<div class="r" style="left:601.0px;top:662.1px;width:1.0px;height:2.4px;background:#e6e7e9"></div>
<div class="r" style="left:742.0px;top:662.1px;width:1.0px;height:2.4px;background:#e6e7e9"></div>
<div class="r" style="left:1096.3px;top:662.1px;width:1.0px;height:2.4px;background:#e6e7e9"></div>
<div class="r" style="left:1390.5px;top:662.1px;width:1.0px;height:2.4px;background:#e6e7e9"></div>
<div class="r" style="left:1584.6px;top:662.1px;width:1.0px;height:2.4px;background:#e6e7e9"></div>
<div class="r" style="left:1796.7px;top:662.1px;width:1.0px;height:2.4px;background:#e6e7e9"></div>
<div class="r" style="left:1931.2px;top:662.1px;width:1.0px;height:2.4px;background:#e6e7e9"></div>
<div class="r" style="left:2158.0px;top:662.1px;width:1.0px;height:2.4px;background:#e6e7e9"></div>
<div class="r" style="left:2264.0px;top:662.1px;width:1.0px;height:2.4px;background:#e6e7e9"></div>
<div class="r" style="left:2420.8px;top:662.1px;width:1.0px;height:2.4px;background:#e6e7e9"></div>
<div class="r" style="left:2572.8px;top:662.1px;width:1.0px;height:2.4px;background:#e6e7e9"></div>
<div class="r" style="left:2682.7px;top:662.1px;width:1.0px;height:2.4px;background:#e6e7e9"></div>
<div class="r" style="left:2784.9px;top:662.1px;width:1.0px;height:2.4px;background:#e6e7e9"></div>
<div class="r" style="left:601.0px;top:737.7px;width:1.0px;height:2.4px;background:#e6e7e9"></div>
<div class="r" style="left:742.0px;top:737.7px;width:1.0px;height:2.4px;background:#e6e7e9"></div>
<div class="r" style="left:1096.3px;top:737.7px;width:1.0px;height:2.4px;background:#e6e7e9"></div>
<div class="r" style="left:1390.5px;top:737.7px;width:1.0px;height:2.4px;background:#e6e7e9"></div>
<div class="r" style="left:1584.6px;top:737.7px;width:1.0px;height:2.4px;background:#e6e7e9"></div>
<div class="r" style="left:1796.7px;top:737.7px;width:1.0px;height:2.4px;background:#e6e7e9"></div>
<div class="r" style="left:1931.2px;top:737.7px;width:1.0px;height:2.4px;background:#e6e7e9"></div>
<div class="r" style="left:2158.0px;top:737.7px;width:1.0px;height:2.4px;background:#e6e7e9"></div>
<div class="r" style="left:2264.0px;top:737.7px;width:1.0px;height:2.4px;background:#e6e7e9"></div>
<div class="r" style="left:2420.8px;top:737.7px;width:1.0px;height:2.4px;background:#e6e7e9"></div>
<div class="r" style="left:2572.8px;top:737.7px;width:1.0px;height:2.4px;background:#e6e7e9"></div>
<div class="r" style="left:2682.7px;top:737.7px;width:1.0px;height:2.4px;background:#e6e7e9"></div>
<div class="r" style="left:2784.9px;top:737.7px;width:1.0px;height:2.4px;background:#e6e7e9"></div>
<div class="r" style="left:601.0px;top:813.3px;width:1.0px;height:2.4px;background:#e6e7e9"></div>
<div class="r" style="left:742.0px;top:813.3px;width:1.0px;height:2.4px;background:#e6e7e9"></div>
<div class="r" style="left:1096.3px;top:813.3px;width:1.0px;height:2.4px;background:#e6e7e9"></div>
<div class="r" style="left:1390.5px;top:813.3px;width:1.0px;height:2.4px;background:#e6e7e9"></div>
<div class="r" style="left:1584.6px;top:813.3px;width:1.0px;height:2.4px;background:#e6e7e9"></div>
<div class="r" style="left:1796.7px;top:813.3px;width:1.0px;height:2.4px;background:#e6e7e9"></div>
<div class="r" style="left:1931.2px;top:813.3px;width:1.0px;height:2.4px;background:#e6e7e9"></div>
<div class="r" style="left:2158.0px;top:813.3px;width:1.0px;height:2.4px;background:#e6e7e9"></div>
<div class="r" style="left:2264.0px;top:813.3px;width:1.0px;height:2.4px;background:#e6e7e9"></div>
<div class="r" style="left:2420.8px;top:813.3px;width:1.0px;height:2.4px;background:#e6e7e9"></div>
<div class="r" style="left:2572.8px;top:813.3px;width:1.0px;height:2.4px;background:#e6e7e9"></div>
<div class="r" style="left:2682.7px;top:813.3px;width:1.0px;height:2.4px;background:#e6e7e9"></div>
<div class="r" style="left:2784.9px;top:813.3px;width:1.0px;height:2.4px;background:#e6e7e9"></div>
<div class="r" style="left:601.0px;top:888.9px;width:1.0px;height:2.4px;background:#e6e7e9"></div>
<div class="r" style="left:742.0px;top:888.9px;width:1.0px;height:2.4px;background:#e6e7e9"></div>
<div class="r" style="left:1096.3px;top:888.9px;width:1.0px;height:2.4px;background:#e6e7e9"></div>
<div class="r" style="left:1390.5px;top:888.9px;width:1.0px;height:2.4px;background:#e6e7e9"></div>
<div class="r" style="left:1584.6px;top:888.9px;width:1.0px;height:2.4px;background:#e6e7e9"></div>
<div class="r" style="left:1796.7px;top:888.9px;width:1.0px;height:2.4px;background:#e6e7e9"></div>
<div class="r" style="left:1931.2px;top:888.9px;width:1.0px;height:2.4px;background:#e6e7e9"></div>
<div class="r" style="left:2158.0px;top:888.9px;width:1.0px;height:2.4px;background:#e6e7e9"></div>
<div class="r" style="left:2264.0px;top:888.9px;width:1.0px;height:2.4px;background:#e6e7e9"></div>
<div class="r" style="left:2420.8px;top:888.9px;width:1.0px;height:2.4px;background:#e6e7e9"></div>
<div class="r" style="left:2572.8px;top:888.9px;width:1.0px;height:2.4px;background:#e6e7e9"></div>
<div class="r" style="left:2682.7px;top:888.9px;width:1.0px;height:2.4px;background:#e6e7e9"></div>
<div class="r" style="left:2784.9px;top:888.9px;width:1.0px;height:2.4px;background:#e6e7e9"></div>
<div class="r" style="left:601.0px;top:964.5px;width:1.0px;height:2.4px;background:#e6e7e9"></div>
<div class="r" style="left:742.0px;top:964.5px;width:1.0px;height:2.4px;background:#e6e7e9"></div>
<div class="r" style="left:1096.3px;top:964.5px;width:1.0px;height:2.4px;background:#e6e7e9"></div>
<div class="r" style="left:1390.5px;top:964.5px;width:1.0px;height:2.4px;background:#e6e7e9"></div>
<div class="r" style="left:1584.6px;top:964.5px;width:1.0px;height:2.4px;background:#e6e7e9"></div>
<div class="r" style="left:1796.7px;top:964.5px;width:1.0px;height:2.4px;background:#e6e7e9"></div>
<div class="r" style="left:1931.2px;top:964.5px;width:1.0px;height:2.4px;background:#e6e7e9"></div>
<div class="r" style="left:2158.0px;top:964.5px;width:1.0px;height:2.4px;background:#e6e7e9"></div>
<div class="r" style="left:2264.0px;top:964.5px;width:1.0px;height:2.4px;background:#e6e7e9"></div>
<div class="r" style="left:2420.8px;top:964.5px;width:1.0px;height:2.4px;background:#e6e7e9"></div>
<div class="r" style="left:2572.8px;top:964.5px;width:1.0px;height:2.4px;background:#e6e7e9"></div>
<div class="r" style="left:2682.7px;top:964.5px;width:1.0px;height:2.4px;background:#e6e7e9"></div>
<div class="r" style="left:2784.9px;top:964.5px;width:1.0px;height:2.4px;background:#e6e7e9"></div>
<div class="r" style="left:601.0px;top:1040.2px;width:1.0px;height:2.4px;background:#e6e7e9"></div>
<div class="r" style="left:742.0px;top:1040.2px;width:1.0px;height:2.4px;background:#e6e7e9"></div>
<div class="r" style="left:1096.3px;top:1040.2px;width:1.0px;height:2.4px;background:#e6e7e9"></div>
<div class="r" style="left:1390.5px;top:1040.2px;width:1.0px;height:2.4px;background:#e6e7e9"></div>
<div class="r" style="left:1584.6px;top:1040.2px;width:1.0px;height:2.4px;background:#e6e7e9"></div>
<div class="r" style="left:1796.7px;top:1040.2px;width:1.0px;height:2.4px;background:#e6e7e9"></div>
<div class="r" style="left:1931.2px;top:1040.2px;width:1.0px;height:2.4px;background:#e6e7e9"></div>
<div class="r" style="left:2158.0px;top:1040.2px;width:1.0px;height:2.4px;background:#e6e7e9"></div>
<div class="r" style="left:2264.0px;top:1040.2px;width:1.0px;height:2.4px;background:#e6e7e9"></div>
<div class="r" style="left:2420.8px;top:1040.2px;width:1.0px;height:2.4px;background:#e6e7e9"></div>
<div class="r" style="left:2572.8px;top:1040.2px;width:1.0px;height:2.4px;background:#e6e7e9"></div>
<div class="r" style="left:2682.7px;top:1040.2px;width:1.0px;height:2.4px;background:#e6e7e9"></div>
<div class="r" style="left:2784.9px;top:1040.2px;width:1.0px;height:2.4px;background:#e6e7e9"></div>
<div class="r" style="left:601.0px;top:1115.8px;width:1.0px;height:2.4px;background:#e6e7e9"></div>
<div class="r" style="left:742.0px;top:1115.8px;width:1.0px;height:2.4px;background:#e6e7e9"></div>
<div class="r" style="left:1096.3px;top:1115.8px;width:1.0px;height:2.4px;background:#e6e7e9"></div>
<div class="r" style="left:1390.5px;top:1115.8px;width:1.0px;height:2.4px;background:#e6e7e9"></div>
<div class="r" style="left:1584.6px;top:1115.8px;width:1.0px;height:2.4px;background:#e6e7e9"></div>
<div class="r" style="left:1796.7px;top:1115.8px;width:1.0px;height:2.4px;background:#e6e7e9"></div>
<div class="r" style="left:1931.2px;top:1115.8px;width:1.0px;height:2.4px;background:#e6e7e9"></div>
<div class="r" style="left:2158.0px;top:1115.8px;width:1.0px;height:2.4px;background:#e6e7e9"></div>
<div class="r" style="left:2264.0px;top:1115.8px;width:1.0px;height:2.4px;background:#e6e7e9"></div>
<div class="r" style="left:2420.8px;top:1115.8px;width:1.0px;height:2.4px;background:#e6e7e9"></div>
<div class="r" style="left:2572.8px;top:1115.8px;width:1.0px;height:2.4px;background:#e6e7e9"></div>
<div class="r" style="left:2682.7px;top:1115.8px;width:1.0px;height:2.4px;background:#e6e7e9"></div>
<div class="r" style="left:2784.9px;top:1115.8px;width:1.0px;height:2.4px;background:#e6e7e9"></div>
<div class="r" style="left:601.0px;top:1191.4px;width:1.0px;height:2.4px;background:#e6e7e9"></div>
<div class="r" style="left:742.0px;top:1191.4px;width:1.0px;height:2.4px;background:#e6e7e9"></div>
<div class="r" style="left:1096.3px;top:1191.4px;width:1.0px;height:2.4px;background:#e6e7e9"></div>
<div class="r" style="left:1390.5px;top:1191.4px;width:1.0px;height:2.4px;background:#e6e7e9"></div>
<div class="r" style="left:1584.6px;top:1191.4px;width:1.0px;height:2.4px;background:#e6e7e9"></div>
<div class="r" style="left:1796.7px;top:1191.4px;width:1.0px;height:2.4px;background:#e6e7e9"></div>
<div class="r" style="left:1931.2px;top:1191.4px;width:1.0px;height:2.4px;background:#e6e7e9"></div>
<div class="r" style="left:2158.0px;top:1191.4px;width:1.0px;height:2.4px;background:#e6e7e9"></div>
<div class="r" style="left:2264.0px;top:1191.4px;width:1.0px;height:2.4px;background:#e6e7e9"></div>
<div class="r" style="left:2420.8px;top:1191.4px;width:1.0px;height:2.4px;background:#e6e7e9"></div>
<div class="r" style="left:2572.8px;top:1191.4px;width:1.0px;height:2.4px;background:#e6e7e9"></div>
<div class="r" style="left:2682.7px;top:1191.4px;width:1.0px;height:2.4px;background:#e6e7e9"></div>
<div class="r" style="left:2784.9px;top:1191.4px;width:1.0px;height:2.4px;background:#e6e7e9"></div>
<div class="r" style="left:601.0px;top:1267.0px;width:1.0px;height:2.4px;background:#e6e7e9"></div>
<div class="r" style="left:742.0px;top:1267.0px;width:1.0px;height:2.4px;background:#e6e7e9"></div>
<div class="r" style="left:1096.3px;top:1267.0px;width:1.0px;height:2.4px;background:#e6e7e9"></div>
<div class="r" style="left:1390.5px;top:1267.0px;width:1.0px;height:2.4px;background:#e6e7e9"></div>
<div class="r" style="left:1584.6px;top:1267.0px;width:1.0px;height:2.4px;background:#e6e7e9"></div>
<div class="r" style="left:1796.7px;top:1267.0px;width:1.0px;height:2.4px;background:#e6e7e9"></div>
<div class="r" style="left:1931.2px;top:1267.0px;width:1.0px;height:2.4px;background:#e6e7e9"></div>
<div class="r" style="left:2158.0px;top:1267.0px;width:1.0px;height:2.4px;background:#e6e7e9"></div>
<div class="r" style="left:2264.0px;top:1267.0px;width:1.0px;height:2.4px;background:#e6e7e9"></div>
<div class="r" style="left:2420.8px;top:1267.0px;width:1.0px;height:2.4px;background:#e6e7e9"></div>
<div class="r" style="left:2572.8px;top:1267.0px;width:1.0px;height:2.4px;background:#e6e7e9"></div>
<div class="r" style="left:2682.7px;top:1267.0px;width:1.0px;height:2.4px;background:#e6e7e9"></div>
<div class="r" style="left:2784.9px;top:1267.0px;width:1.0px;height:2.4px;background:#e6e7e9"></div>
</div>
<div class="r" style="left:308.0px;top:326.0px;width:252.0px;height:63.3px;box-sizing:border-box;border:4.6px solid #d2381e"></div>
<div class="r" style="left:2643.4px;top:440.4px;width:138.6px;height:92.6px;box-sizing:border-box;border:5px solid #d2381e"></div>
<svg class="r" style="left:0;top:0" width="2821" height="1323"><path d="M1897.4 499.2 L2486 500.7" stroke="#d2381e" stroke-width="5"/><path d="M2484.6 489 L2508.6 500.7 L2484.6 513z" fill="#d2381e"/></svg>
<div class="r" style="left:288.5px;top:1253.5px;width:2532.5px;height:69.5px;background:linear-gradient(#e4e4e4,#dbdbdb)"></div>
<div class="t" style="left:308.8px;top:1284.0px;font-size:17.5px;color:#333d4a;">Showing 1 to 25 of many results</div>
<div class="t" style="left:2391.3px;top:1283.6px;font-size:17.3px;color:#2b4e72;">Results per page</div>
<div class="r" style="left:2539.5px;top:1275px;width:70.5px;height:35.3px;box-sizing:border-box;background:linear-gradient(#fff,#f6f6f6);border-radius:6px;box-shadow:0 0 0 0.5px #d6d6d6,0 1px 2px rgba(0,0,0,0.12)"></div>
<div class="t" style="left:2555.0px;top:1284.9px;font-size:15.5px;color:#333d4d;">25</div>
<svg class="r" style="left:2582px;top:1287px" width="13" height="10" viewBox="0 0 13 10"><path d="M1.5 2.5l5 5 5-5" stroke="#333d4d" stroke-width="1.8" fill="none"/></svg>
<div class="r" style="left:2628px;top:1275px;width:164px;height:35.3px;box-sizing:border-box;background:linear-gradient(#fff,#f6f6f6);border-radius:6px;box-shadow:0 0 0 0.5px #d6d6d6,0 1px 2px rgba(0,0,0,0.12)"></div>
<div class="r" style="left:2723.0px;top:1275.0px;width:1.0px;height:35.3px;background:#dadada"></div>
<svg class="r" style="left:2639px;top:1284px" width="10" height="17" viewBox="0 0 10 17"><path d="M8 1.5l-6 7 6 7" stroke="#c5c9ce" stroke-width="1.6" fill="none"/></svg>
<div class="t" style="left:2655.3px;top:1284.9px;font-size:15.5px;color:#c5c9ce;">Previous</div>
<div class="t" style="left:2732.2px;top:1284.9px;font-size:15.5px;color:#59616b;">Next</div>
<svg class="r" style="left:2769px;top:1284px" width="10" height="17" viewBox="0 0 10 17"><path d="M2 1.5l6 7-6 7" stroke="#59616b" stroke-width="1.6" fill="none"/></svg>
</body></html>
